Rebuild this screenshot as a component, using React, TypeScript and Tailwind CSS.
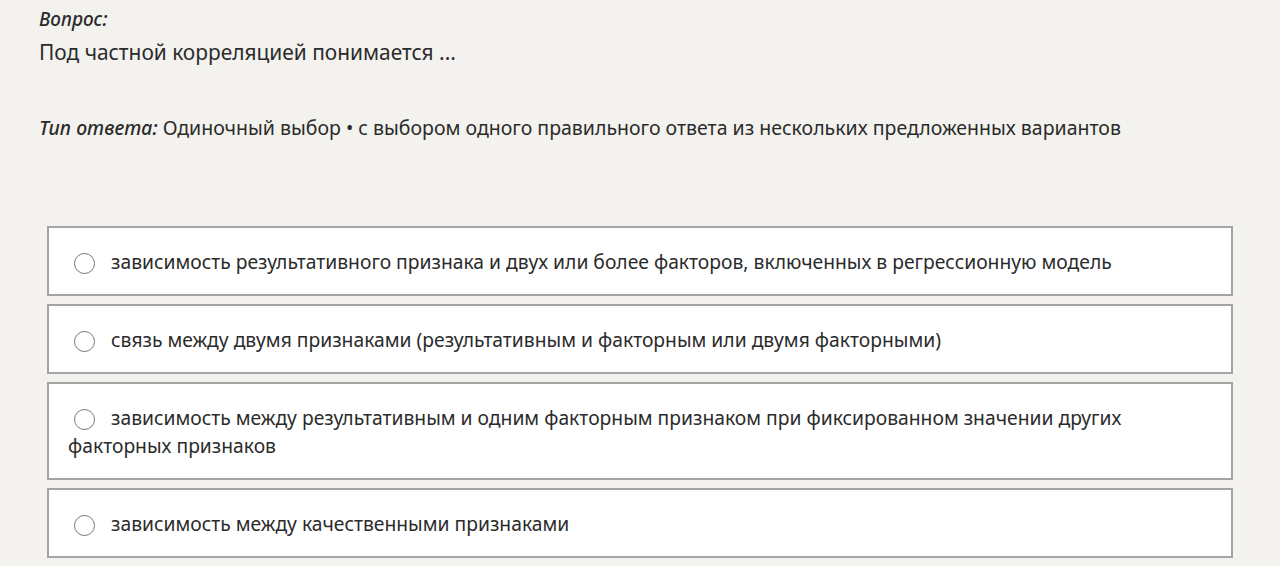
import React from 'react';

const options: string[] = [
  'зависимость результативного признака и двух или более факторов, включенных в регрессионную модель',
  'связь между двумя признаками (результативным и факторным или двумя факторными)',
  'зависимость между результативным и одним факторным признаком при фиксированном значении других факторных признаков',
  'зависимость между качественными признаками',
];

const App: React.FC = () => {
  return (
    <div
      className="min-h-[566px] bg-[#f3f2ee] text-[#2b2b2b] overflow-hidden"
      style={{ fontFamily: '"Noto Sans", "Open Sans", sans-serif' }}
    >
      <div className="pl-[39px] pt-[5px]">
        <div className="italic text-[19px] leading-[28px] font-medium">Вопрос:</div>
        <div className="text-[20.9px] leading-[28px] mt-[5px]">Под частной корреляцией понимается ...</div>
        <div className="text-[19.5px] leading-[28px] mt-[48px]">
          <span className="italic font-medium">Тип ответа:</span> Одиночный выбор • с выбором одного правильного ответа из нескольких предложенных вариантов
        </div>
      </div>

      <div className="mx-[47px] mt-[84px] flex flex-col gap-[8px]">
        {options.map((text, i) => (
          <label
            key={i}
            className="block bg-white border-2 border-[#a3a3a3] pl-[19px] pr-[20px] pt-[20px] pb-[18px] text-[19.3px] leading-[28px] cursor-pointer"
          >
            <span className="inline-block align-[-5px] w-[21px] h-[21px] rounded-full border-[1.5px] border-[#767676] bg-white ml-[6px] mr-[16px]" />
            {text}
          </label>
        ))}
      </div>
    </div>
  );
};

export default App;
